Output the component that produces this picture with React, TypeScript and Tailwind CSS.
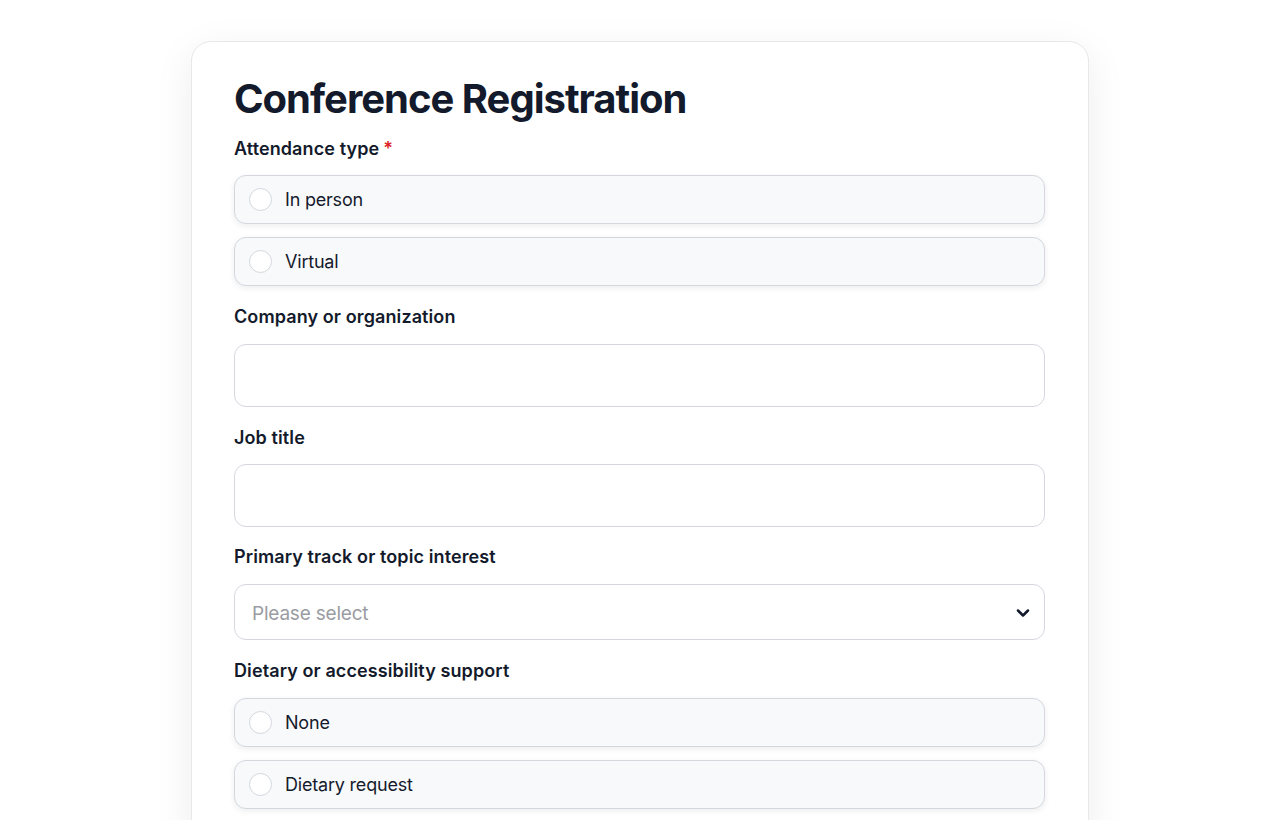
import { ChevronDown } from "lucide-react";

const font = { fontFamily: "Inter, 'Noto Sans', sans-serif" };

function Label({ text, required }: { text: string; required?: boolean }) {
  return (
    <div className="text-[18px] leading-6 font-semibold text-[#131a2b] tracking-[0.1px]">
      {text}
      {required && <span className="text-[#dc2626] ml-1">*</span>}
    </div>
  );
}

function RadioOption({ text }: { text: string }) {
  return (
    <label className="flex items-center h-[49px] px-[14px] gap-[13px] rounded-xl border border-[#d4d7de] bg-[#f8f9fb] shadow-[0_2px_6px_rgba(16,24,40,0.08)]">
      <span className="w-[23px] h-[23px] rounded-full border border-[#d4d7de] bg-white shrink-0" />
      <span className="text-[18px] text-[#151b2c] tracking-[-0.2px]">{text}</span>
    </label>
  );
}

function TextInput() {
  return <div className="h-[63px] rounded-xl border border-[#d4d7de] bg-white" />;
}

export default function App() {
  return (
    <div className="min-h-screen bg-white pt-[41px] flex justify-center" style={font}>
      <div className="w-[898px] rounded-[20px] border border-[#e6e8ec] bg-white shadow-[0_10px_40px_rgba(16,24,40,0.07)] pl-[42px] pr-[43px] pt-[34px] pb-10">
        <h1 className="text-[40px] leading-[46px] font-bold text-[#131a2b] tracking-[-1px]">
          Conference Registration
        </h1>

        <div className="mt-[15px]">
          <Label text="Attendance type" required />
          <div className="mt-[14px] flex flex-col gap-[13px]">
            <RadioOption text="In person" />
            <RadioOption text="Virtual" />
          </div>
        </div>

        <div className="mt-[19px]">
          <Label text="Company or organization" />
          <div className="mt-[15px]">
            <TextInput />
          </div>
        </div>

        <div className="mt-[19px]">
          <Label text="Job title" />
          <div className="mt-[14px]">
            <TextInput />
          </div>
        </div>

        <div className="mt-[18px]">
          <Label text="Primary track or topic interest" />
          <div className="mt-[15px] h-[56px] rounded-xl border border-[#d4d7de] bg-white flex items-center justify-between pl-[17px] pr-[11px]">
            <span className="mt-[4px] text-[19px] text-[#9a9ca3] tracking-[-0.2px]">Please select</span>
            <ChevronDown size={20} strokeWidth={3} className="text-[#131a2b] mt-[2px]" />
          </div>
        </div>

        <div className="mt-[19px]">
          <Label text="Dietary or accessibility support" />
          <div className="mt-[15px] flex flex-col gap-[13px]">
            <RadioOption text="None" />
            <RadioOption text="Dietary request" />
          </div>
        </div>
      </div>
    </div>
  );
}
